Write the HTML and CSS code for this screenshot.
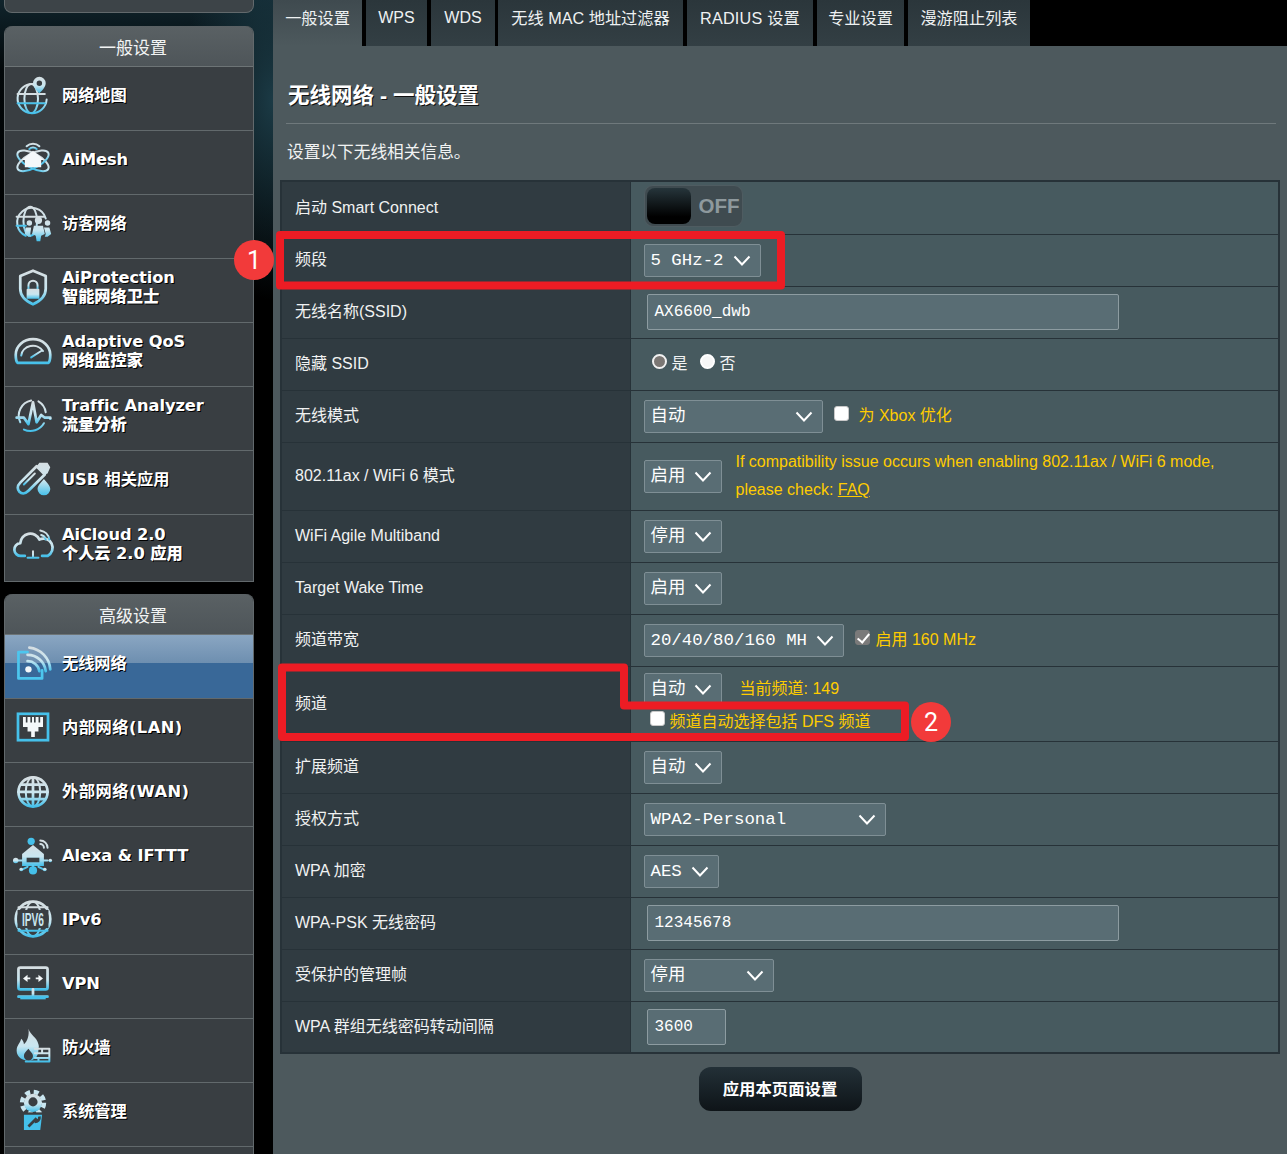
FILE: index.html
```html
<!DOCTYPE html>
<html lang="zh-CN">
<head>
<meta charset="utf-8">
<title>无线网络 - 一般设置</title>
<link rel="stylesheet" href="styles.css">
</head>
<body>
<svg class="defs" width="0" height="0" aria-hidden="true">
  <defs>
    <linearGradient id="ig" x1="0" y1="0" x2="0" y2="1">
      <stop offset="0" stop-color="#d5dee2"/>
      <stop offset="0.55" stop-color="#c9e6f0"/>
      <stop offset="1" stop-color="#45c0ea"/>
    </linearGradient>
  </defs>
</svg>
<div class="page">
  <aside class="sidebar">
    <div class="stub"></div>
    <section class="panel">
      <h2 class="panel-head">一般设置</h2>
      <a class="item">
        <svg class="ico" viewBox="0 0 44 44"><g class="ln"><path d="M22 10a16 16 0 1 0 15 17"/><ellipse cx="20" cy="26" rx="7.5" ry="16"/><path d="M5 21h30M5 31h30"/></g><path class="fl" d="M29 2a7 7 0 0 0-7 7c0 5 7 11 7 11s7-6 7-11a7 7 0 0 0-7-7zm0 4a3 3 0 1 1 0 6 3 3 0 0 1 0-6z"/></svg>
        <span class="lbl">网络地图</span>
      </a>
      <a class="item">
        <svg class="ico" viewBox="0 0 44 44"><g class="ln"><ellipse cx="22" cy="24" rx="19" ry="8" transform="rotate(28 22 24)"/><ellipse cx="22" cy="24" rx="19" ry="8" transform="rotate(-28 22 24)"/><path d="M15 8a10 10 0 0 1 14 0M18 11a6 6 0 0 1 8 0"/></g><path class="fw" d="M22 13 10 23h3v8h18v-8h3z"/></svg>
        <span class="lbl">AiMesh</span>
      </a>
      <a class="item">
        <svg class="ico" viewBox="0 0 44 44"><g class="ln"><path d="M36 17A16 16 0 1 0 14 36"/><ellipse cx="19" cy="20" rx="7.5" ry="16"/><path d="M4 15h30M4 25h10"/></g><path class="fl" d="M28 15a4 4 0 1 1 0 8 4 4 0 0 1 0-8zm-5 10h10l2 9-4 2-1 6h-4l-1-6-4-2zM18 19a3 3 0 1 1 0 6 3 3 0 0 1 0-6zm-4 8h6l-1 7 1 3h-3l-4-3zM38 19a3 3 0 1 1 0 6 3 3 0 0 1 0-6zm-4 8h6l2 7-4 3h-3l1-3z"/></svg>
        <span class="lbl">访客网络</span>
      </a>
      <a class="item">
        <svg class="ico" viewBox="0 0 44 44"><path class="ln th" d="M22 4 36 10v14c0 9-7 14-14 17C15 38 8 33 8 24V10z"/><path class="ln" d="M17 24v-4a5 5 0 0 1 10 0v4"/><rect class="fl" x="15" y="24" width="14" height="11" rx="1"/></svg>
        <span class="lbl two"><b>AiProtection</b><b>智能网络卫士</b></span>
      </a>
      <a class="item">
        <svg class="ico" viewBox="0 0 44 44"><path class="ln th" d="M5 35c-2-2-2-6-2-9a19 17 0 0 1 38 0c0 3 0 7-2 9z"/><path class="ln" d="M9 27a13 12 0 0 1 24-5M20 29l11-7"/></svg>
        <span class="lbl two"><b>Adaptive QoS</b><b>网络监控家</b></span>
      </a>
      <a class="item">
        <svg class="ico" viewBox="0 0 44 44"><path class="ln" d="M8 30A17 17 0 0 1 20 6M28 7a17 17 0 0 1 8 12M34 31a17 17 0 0 1-22 7"/><path class="ln th" d="M4 25h8l5 7 5-24 4 22 5-8 4 3h6"/><circle class="fl" cx="41" cy="26" r="1.500"/></svg>
        <span class="lbl two"><b>Traffic Analyzer</b><b>流量分析</b></span>
      </a>
      <a class="item">
        <svg class="ico" viewBox="0 0 44 44"><path class="ln th" d="M26 8 8 26c-4 4-3 8-1 10s6 3 10-1L35 17z"/><path class="ln" d="M12 28 24 16"/><path class="fl" d="M29 4l9 0 3 5-3 7-3 1-9-9zM34 22c3 4 7 7 7 11a7 7 0 0 1-14 0c0-4 4-7 7-11z"/></svg>
        <span class="lbl">USB 相关应用</span>
      </a>
      <a class="item last">
        <svg class="ico" viewBox="0 0 44 44"><path class="ln th" d="M13 34H9a7 7 0 0 1-1-14 11 11 0 0 1 21-4 9 9 0 0 1 9 18h-6"/><path class="ln" d="M30 6a12 12 0 0 1 10 10M31 11a7 7 0 0 1 5 5"/><path class="ln" d="M16 36h12M22 29v6"/></svg>
        <span class="lbl two"><b>AiCloud 2.0</b><b>个人云 2.0 应用</b></span>
      </a>
    </section>

    <section class="panel">
      <h2 class="panel-head">高级设置</h2>
      <a class="item active">
        <svg class="ico" viewBox="0 0 44 44"><path class="ln cy th" d="M16 10H6v29h26V30"/><circle class="fw" cx="17" cy="29" r="3.500"/><path class="ln th" d="M16 20a13 13 0 0 1 13 11M16 13a20 20 0 0 1 20 18M18 5a26 26 0 0 1 23 24"/></svg>
        <span class="lbl">无线网络</span>
      </a>
      <a class="item">
        <svg class="ico" viewBox="0 0 44 44"><rect class="cyf" x="4" y="6" width="36" height="32"/><rect class="dk" x="7" y="9" width="30" height="26"/><path class="fw" d="M11 11h22v11h-5v5h-4v6h-4v-6h-4v-5h-5z"/><path class="dkl" d="M15 11v6M20 11v6M24 11v6M29 11v6"/></svg>
        <span class="lbl sp">内部网络(LAN)</span>
      </a>
      <a class="item">
        <svg class="ico" viewBox="0 0 44 44"><circle class="ln th" cx="22" cy="23" r="16"/><ellipse class="ln" cx="22" cy="23" rx="8" ry="16"/><path class="ln th" d="M22 7v32M6 23h32M9 15h26M9 31h26"/></svg>
        <span class="lbl sp">外部网络(WAN)</span>
      </a>
      <a class="item">
        <svg class="ico" viewBox="0 0 44 44"><path class="fl" d="M22 11 10 21v13h24V21z"/><rect class="dk" x="15" y="25" width="14" height="5"/><path class="ln" d="M30 6a8 8 0 0 1 8 8M30 10a4 4 0 0 1 4 4M13 28H6M31 28h7M16 35l-6 3M28 35l6 3M22 34v3"/><circle class="cyf" cx="20" cy="7" r="4"/><circle class="fl" cx="3" cy="28" r="3"/><circle class="fl" cx="41" cy="28" r="2"/><circle class="cyf" cx="22" cy="39" r="4.500"/><circle class="fl" cx="9" cy="38" r="2"/><circle class="fl" cx="35" cy="38" r="2"/></svg>
        <span class="lbl">Alexa &amp; IFTTT</span>
      </a>
      <a class="item">
        <svg class="ico" viewBox="0 0 44 44"><circle class="ln th" cx="22" cy="22" r="19"/><ellipse class="ln" cx="22" cy="22" rx="9" ry="19"/><path class="ln" d="M6 9h32M6 35h32"/><rect class="bgf" x="5" y="12" width="34" height="20"/><text class="ipv" x="0" y="0" text-anchor="middle" transform="translate(22 30) scale(.86 1.600)">IPV6</text></svg>
        <span class="lbl">IPv6</span>
      </a>
      <a class="item">
        <svg class="ico" viewBox="0 0 44 44"><rect class="ln th" x="6" y="5" width="32" height="24" rx="2"/><path class="fw" d="M11 17l5-4v3h3v2h-3v3zM33 17l-5-4v3h-3v2h3v3z"/><path class="ln th" d="M22 29v6M6 37h32"/><path class="cyl" d="M8 38.500h28"/></svg>
        <span class="lbl">VPN</span>
      </a>
      <a class="item">
        <svg class="ico" viewBox="0 0 44 44"><path class="fl" d="M17 2c2 7 9 9 11 17 1 3 0 4 0 6 0 8-5 12-11 12S4 33 4 26c0-6 4-8 5-13 2 2 3 4 3 6 4-3 6-10 5-17zM17 24c-3 3-5 5-5 8a5 5 0 0 0 10 0c0-3-3-5-5-8z"/><path class="ln" d="M24 24h16v14H14M24 29h16M24 34h16M32 24v5M28 34v4"/></svg>
        <span class="lbl">防火墙</span>
      </a>
      <a class="item">
        <svg class="ico" viewBox="0 0 44 44"><circle class="teeth" cx="22" cy="13" r="12"/><circle class="fl" cx="22" cy="13" r="10"/><circle class="dk" cx="22" cy="12" r="5"/><path class="dkl wide" d="M8 25h28"/><path class="cyf" d="M12 26h20l-2 17H12z"/><path class="dkl th" d="M17 39l9-9M24 34a5 5 0 0 0 5-6"/></svg>
        <span class="lbl">系统管理</span>
      </a>
      <a class="item"></a>
    </section>
  </aside>

  <main class="main">
    <nav class="tabs">
      <a class="tab on">一般设置</a>
      <a class="tab t-wps">WPS</a>
      <a class="tab t-wds">WDS</a>
      <a class="tab t-mac">无线 MAC 地址过滤器</a>
      <a class="tab t-rad">RADIUS 设置</a>
      <a class="tab t-pro">专业设置</a>
      <a class="tab t-rom">漫游阻止列表</a>
    </nav>
    <div class="content">
      <h1 class="title">无线网络 - 一般设置</h1>
      <hr class="rule">
      <p class="desc">设置以下无线相关信息。</p>
      <table class="form">
        <colgroup><col class="c1"><col></colgroup>
        <tr class="r-first"><th>启动 Smart Connect</th><td>
          <div class="toggle"><span class="knob"></span><span class="off">OFF</span></div>
        </td></tr>
        <tr><th>频段</th><td>
          <div class="sel w-117"><span class="val">5 GHz-2</span><svg class="chev" viewBox="0 0 18 11"><path d="M1.500 1.500 9 9.500l7.500-8"/></svg></div>
        </td></tr>
        <tr><th>无线名称(SSID)</th><td><div class="inp w-472 ind">AX6600_dwb</div></td></tr>
        <tr><th>隐藏 SSID</th><td>
          <div class="radios">
            <input class="radio" type="radio" name="h" checked aria-label="是"><span class="rt">是</span>
            <input class="radio" type="radio" name="h" aria-label="否"><span class="rt">否</span>
          </div>
        </td></tr>
        <tr><th>无线模式</th><td>
          <div class="line">
            <div class="sel w-179"><span class="val">自动</span><svg class="chev" viewBox="0 0 18 11"><path d="M1.500 1.500 9 9.500l7.500-8"/></svg></div>
            <input class="check up" type="checkbox" aria-label="为 Xbox 优化"><span class="note xbox">为 Xbox 优化</span>
          </div>
        </td></tr>
        <tr class="r-68"><th>802.11ax / WiFi 6 模式</th><td>
          <div class="line">
            <div class="sel w-78"><span class="val">启用</span><svg class="chev" viewBox="0 0 18 11"><path d="M1.500 1.500 9 9.500l7.500-8"/></svg></div>
            <p class="note para">If compatibility issue occurs when enabling 802.11ax / WiFi 6 mode,<br>please check: <u>FAQ</u></p>
          </div>
        </td></tr>
        <tr><th>WiFi Agile Multiband</th><td>
          <div class="sel w-78"><span class="val">停用</span><svg class="chev" viewBox="0 0 18 11"><path d="M1.500 1.500 9 9.500l7.500-8"/></svg></div>
        </td></tr>
        <tr><th>Target Wake Time</th><td>
          <div class="sel w-78"><span class="val">启用</span><svg class="chev" viewBox="0 0 18 11"><path d="M1.500 1.500 9 9.500l7.500-8"/></svg></div>
        </td></tr>
        <tr><th>频道带宽</th><td>
          <div class="line">
            <div class="sel w-200"><span class="val">20/40/80/160 MH</span><svg class="chev" viewBox="0 0 18 11"><path d="M1.500 1.500 9 9.500l7.500-8"/></svg></div>
            <input class="check up" type="checkbox" checked aria-label="启用 160 MHz"><span class="note mhz">启用 160 MHz</span>
          </div>
        </td></tr>
        <tr class="r-76"><th>频道</th><td>
          <div class="line">
            <div class="sel w-78"><span class="val">自动</span><svg class="chev" viewBox="0 0 18 11"><path d="M1.500 1.500 9 9.500l7.500-8"/></svg></div>
            <span class="note cur">当前频道: 149</span>
          </div>
          <div class="line dfs"><input class="check up" type="checkbox" aria-label="DFS"><span class="note">频道自动选择包括 DFS 频道</span></div>
        </td></tr>
        <tr><th>扩展频道</th><td>
          <div class="sel w-78"><span class="val">自动</span><svg class="chev" viewBox="0 0 18 11"><path d="M1.500 1.500 9 9.500l7.500-8"/></svg></div>
        </td></tr>
        <tr><th>授权方式</th><td>
          <div class="sel w-242"><span class="val">WPA2-Personal</span><svg class="chev" viewBox="0 0 18 11"><path d="M1.500 1.500 9 9.500l7.500-8"/></svg></div>
        </td></tr>
        <tr><th>WPA 加密</th><td>
          <div class="sel w-75"><span class="val">AES</span><svg class="chev" viewBox="0 0 18 11"><path d="M1.500 1.500 9 9.500l7.500-8"/></svg></div>
        </td></tr>
        <tr><th>WPA-PSK 无线密码</th><td><div class="inp w-472 ind">12345678</div></td></tr>
        <tr><th>受保护的管理帧</th><td>
          <div class="sel w-130"><span class="val">停用</span><svg class="chev" viewBox="0 0 18 11"><path d="M1.500 1.500 9 9.500l7.500-8"/></svg></div>
        </td></tr>
        <tr><th>WPA 群组无线密码转动间隔</th><td><div class="inp w-79 ind">3600</div></td></tr>
      </table>
      <div class="actions"><button class="apply" type="button">应用本页面设置</button></div>
    </div>
  </main>

  <svg class="marks" viewBox="0 0 1287 1154" aria-hidden="true">
    <path d="M280 235H781V285.500H280Z"/>
    <path d="M282 667.500H624V705.500H905V737H282Z"/>
  </svg>
  <div class="badge b1">1</div>
  <div class="badge b2">2</div>
</div>
</body>
</html>
```

FILE: styles.css
```css
* { box-sizing: border-box; }
html, body { margin: 0; padding: 0; background: #000; }
body { font-family: "Liberation Sans", "Noto Sans CJK SC", sans-serif; color: #fff; }
.defs { position: absolute; }

.page { position: relative; display: flex; width: 1287px; height: 1154px; overflow: hidden; background: #000; }

/* Sidebar */
.sidebar {
  flex: 0 0 273px;
  padding: 0 19px 0 4px;
  background: radial-gradient(ellipse 90px 200px at 100% 100px, #1b3a45 0, rgba(27,58,69,0) 100%),
              linear-gradient(180deg, #10242c 0, #03080a 70px, #000 260px);
}
.stub { height: 13px; margin-bottom: 13px; background: #3d4448; border: 1px solid #62696c; border-top: 0; border-radius: 0 0 8px 8px; }
.panel { border: 1px solid #62696c; border-top: 0; border-radius: 8px 8px 0 0; margin-bottom: 12px; background: #393e42; }
.panel-head {
  height: 41px; margin: 0; border-radius: 8px 8px 0 0;
  display: flex; align-items: center; justify-content: center;
  background: linear-gradient(180deg, #5a6164 0, #4e5559 100%);
  border-bottom: 1px solid #6d7476;
  font-size: 17px; line-height: 20px; font-weight: 400; color: #f2f4f4; padding: 5px 0 0 8px;
}
.item { display: flex; align-items: center; height: 64px; padding-left: 8px; border-bottom: 1px solid #62696c; background: #393e42; }
.item.last { height: 66px; border-bottom: 0; }
.item.active { background: linear-gradient(180deg, #8aa6c2 0, #6e8fb0 44%, #396898 45%, #396898 100%); }
.ico { flex: 0 0 40px; width: 40px; height: 40px; margin: 0 9px 7px 0; overflow: visible; }
.lbl { font-family: "DejaVu Sans", "Noto Sans CJK SC", sans-serif; font-weight: 700; font-size: 16.300px; line-height: 19px; color: #fff; text-shadow: 1px 1px 0 #000; white-space: nowrap; letter-spacing: -0.100px; padding-bottom: 6px; }
.lbl.two { padding-bottom: 8px; }
.lbl.sp { letter-spacing: 0.450px; }
.lbl b { display: block; }

.ln { fill: none; stroke: url(#ig); stroke-width: 2.200; stroke-linecap: round; stroke-linejoin: round; }
.th { stroke-width: 3; }
.cy { stroke: #4cc6ee; }
.fl { fill: url(#ig); }
.fw { fill: #f4f8fa; }
.cyf { fill: #45c0ea; }
.dk { fill: #393e42; }
.bgf { fill: #393e42; }
.dkl { fill: none; stroke: #393e42; stroke-width: 1.800; }
.dkl.wide { stroke-width: 3; }
.dkl.th { stroke-width: 3; }
.cyl { fill: none; stroke: #45c0ea; stroke-width: 3; }
.teeth { fill: none; stroke: #c9e6f0; stroke-width: 5; stroke-dasharray: 5.500 4; }
.ipv { font-family: "Liberation Sans", sans-serif; font-size: 13px; font-weight: 700; fill: #c9e6f0; }

/* Main */
.main { flex: 1 1 auto; min-width: 0; background: #4d595d; }
.tabs { display: flex; height: 46px; background: #000; font-size: 16.200px; line-height: 20px; }
.tab { display: flex; align-items: center; justify-content: center; height: 46px; margin-right: 4px; background: linear-gradient(180deg, #2b363b 0, #333f44 100%); color: #eef1f2; padding-bottom: 10px; }
.tab.on { width: 89px; background: linear-gradient(180deg, #3f4a4f 0, #4d595d 100%); margin-right: 4px; }
.t-wps { width: 61px; font-size: 16px; }
.t-wds { width: 64px; margin-right: 3px; font-size: 16px; }
.t-mac { width: 185px; }
.t-rad { width: 126px; letter-spacing: 0.200px; }
.t-pro { width: 87px; }
.t-rom { width: 122px; margin-right: 0; }

.content { padding-left: 7px; padding-right: 6px; }
.title { height: 77px; margin: 0; padding: 22px 0 0 8px; display: flex; align-items: center; font-size: 21.500px; line-height: 26px; font-weight: 700; color: #fff; text-shadow: 1px 1px 0 #111; }
.rule { margin: 0 5px 0 6px; height: 1px; border: 0; background: #6f797c; }
.desc { height: 56px; margin: 0; padding: 19px 0 0 7px; font-size: 16.700px; line-height: 19px; color: #f1f3f3; }

.form { width: 1000px; table-layout: fixed; border-collapse: collapse; border: 2px solid #273238; }
.c1 { width: 349px; }
.form tr { height: 52px; }
.form .r-first { height: 53px; }
.form .r-68 { height: 68px; }
.form .r-76 { height: 75px; }
.form th, .form td { border: 1px solid #273238; font-size: 16px; line-height: 18px; font-weight: 400; }
.form th { background: #303b41; text-align: left; padding: 0 0 0 13px; color: #f0f2f2; }
.form td { background: #475a5f; padding: 0 0 0 13px; }
.form .r-76 td { vertical-align: top; padding-top: 6px; }

.sel { display: flex; align-items: center; justify-content: space-between; height: 33px; padding: 0 9px 0 6px; background: #596d74; border: 1px solid #7f8f95; border-radius: 2px; overflow: hidden; }
.val { font-family: "Liberation Mono", "Noto Sans CJK SC", monospace; font-size: 17.400px; line-height: 20px; color: #fff; white-space: pre; padding-top: 1px; }
.chev { flex: 0 0 18px; width: 18px; height: 11px; }
.chev path { fill: none; stroke: #fff; stroke-width: 2; }
.w-75 { width: 75px; }
.w-78 { width: 78px; }
.w-117 { width: 117px; }
.w-130 { width: 130px; }
.w-179 { width: 179px; }
.w-200 { width: 200px; }
.w-242 { width: 242px; }

.inp { height: 36px; display: flex; align-items: center; padding-left: 7px; background: #596d74; border: 1px solid #8d9ca1; border-radius: 2px; font-family: "Liberation Mono", monospace; font-size: 16px; color: #fff; }
.ind { margin-left: 3px; }
.w-472 { width: 472px; }
.w-79 { width: 79px; }

.toggle { display: flex; align-items: center; width: 99px; height: 42px; padding: 2px; margin-bottom: 3px; background: #3f4b50; border: 1px solid #4f5c61; border-radius: 9px; }
.knob { width: 47px; height: 36px; border-radius: 8px; background: linear-gradient(180deg, #26353b 0, #000 80%); }
.off { margin-left: 8px; font-size: 20.500px; line-height: 24px; font-weight: 700; color: #8e999d; }

.radios { display: flex; align-items: center; }
.radio { appearance: none; -webkit-appearance: none; margin: 0; width: 15px; height: 15px; border-radius: 50%; border: 2px solid #fff; background: #f7f7f7; position: relative; top: -3px; margin-left: 8px; }
.radio:checked { background: #7b7774; border: 2px solid #f2f2f2; }
.rt { margin-left: 5px; margin-right: 4px; font-size: 16px; color: #f3f5f5; }

.line { display: flex; align-items: center; }
.check { appearance: none; -webkit-appearance: none; margin: 0; width: 15px; height: 15px; border-radius: 3px; background: #fff; border: 1px solid #c8c8c8; position: relative; flex: 0 0 15px; }
.check.up { top: -3px; }
.check:checked { background: #7a7a7a; border-color: #7a7a7a; }
.check:checked::after { content: ""; position: absolute; left: 4px; top: 0; width: 5px; height: 10px; border: solid #fff; border-width: 0 2px 2px 0; transform: rotate(40deg); }
.note { color: #ffcc00; font-size: 16px; line-height: 18px; white-space: nowrap; }
.line > .check.up { margin-left: 11px; }
.xbox { margin-left: 10px; }
.mhz { margin-left: 6px; }
.para { margin: 0 0 0 14px; line-height: 28px; }
.para u { text-decoration: underline; }
.cur { margin-left: 18px; }
.dfs { margin-top: 7px; }
.dfs .check.up { margin-left: 6px; }
.dfs .note { margin-left: 5px; }

.actions { display: flex; justify-content: center; width: 1000px; padding-top: 13px; }
.apply { width: 163px; height: 44px; border: 0; border-radius: 12px; background: linear-gradient(180deg, #233037 0, #0e1418 100%); color: #fff; font-family: "Liberation Sans", "Noto Sans CJK SC", sans-serif; font-size: 16.400px; line-height: 18px; font-weight: 700; }

/* Annotations drawn over the page */
.marks { position: absolute; left: 0; top: 0; width: 1287px; height: 1154px; pointer-events: none; }
.marks path { fill: none; stroke: #ed1c24; stroke-width: 8; stroke-linejoin: round; }
.badge { position: absolute; width: 40px; height: 40px; border-radius: 50%; background: #f23a3a; color: #fff; font-size: 25px; display: flex; align-items: center; justify-content: center; font-family: "Roboto", "Liberation Sans", sans-serif; }
.b1 { left: 234px; top: 240px; }
.b2 { left: 911px; top: 702px; }
```
